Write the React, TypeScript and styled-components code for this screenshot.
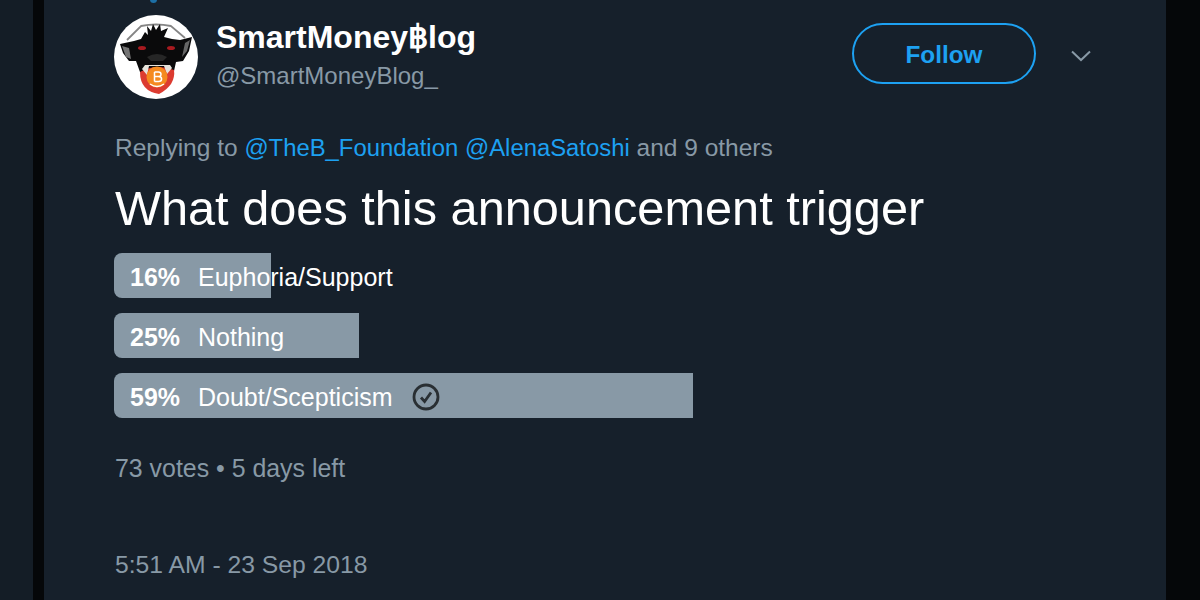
import React from 'react'
import styled, { createGlobalStyle } from 'styled-components'

const GlobalStyle = createGlobalStyle`
  html, body {
    margin: 0;
    padding: 0;
    background: #050709;
    overflow: hidden;
  }
  body {
    font-family: "Liberation Sans", Arial, sans-serif;
  }
`

const options = [
  { percent: 16, width: 157, label: 'Euphoria/Support', chosen: false },
  { percent: 25, width: 245, label: 'Nothing', chosen: false },
  { percent: 59, width: 579, label: 'Doubt/Scepticism', chosen: true },
]

const Avatar: React.FC = () => (
  <AvatarSvg viewBox='0 0 84 84' role='img' aria-label='profile picture'>
    <circle cx='42' cy='42' r='42' fill='#fff' />
    <path d='M13 25 L27 11 Q42 8 57 11 L71 23' fill='none' stroke='#858585' strokeWidth='1.8' />
    <path
      d='M6 29 L20 26 L27 24 L31 17 L34 20 L33 11 L37 16 L39 9 L42 15 L46 9 L47 16 L54 13 L50 22 L58 24 L66 25 L78 22 L75 36 L69 46 L62 47 L60 56 L26 57 L22 46 L15 46 L9 38 Z'
      fill='#0a0a0b'
    />
    <path d='M8 31 L15 33 L17 44 L12 42 Z' fill='#747474' />
    <path d='M76 25 L71 28 L68 42 L73 36 Z' fill='#666' />
    <ellipse cx='28' cy='33' rx='4' ry='2' fill='#a81a1f' />
    <ellipse cx='57' cy='33' rx='4' ry='2' fill='#a81a1f' />
    <path d='M33 42 Q43 36 53 42 L49 46 L37 46 Z' fill='#262626' />
    <path d='M26 57 Q42 48 60 55 Q62 70 45 79 Q26 76 26 57 Z' fill='#dc3b30' />
    <path d='M28 54 L33 60 L35 51 L50 51 L53 59 L58 53 L56 50 L31 50 Z' fill='#e6e3dc' />
    <circle cx='43' cy='62' r='10.5' fill='#f58a1f' />
    <path
      d='M40.5 57 L40.5 66.5 M40.5 57 H44.5 Q47 57 47 59.3 Q47 61.6 44.5 61.6 H40.5 M44.5 61.6 Q47.6 61.6 47.6 64 Q47.6 66.5 44.5 66.5 H40.5'
      fill='none'
      stroke='#fff'
      strokeWidth='1.5'
    />
    <path d='M36 69 Q43 74 50 69' fill='none' stroke='#fff' strokeWidth='1.3' />
  </AvatarSvg>
)

const App: React.FC = () => {
  return (
    <>
      <GlobalStyle />
      <Page>
        <Gutter />
        <Strip />
        <Panel>
          <ThreadDot />
          <Header>
            <Avatar />
            <Names>
              <DisplayName>SmartMoney฿log</DisplayName>
              <Handle>@SmartMoneyBlog_</Handle>
            </Names>
            <FollowButton>Follow</FollowButton>
            <Caret viewBox='0 0 22 14' aria-hidden='true'>
              <path d='M2 2.5 L11 11 L20 2.5' fill='none' stroke='#8899a6' strokeWidth='2' />
            </Caret>
          </Header>
          <ReplyLine>
            Replying to <Mention>@TheB_Foundation</Mention> <Mention>@AlenaSatoshi</Mention> and 9 others
          </ReplyLine>
          <Question>What does this announcement trigger</Question>
          <Poll>
            {options.map((option) => (
              <PollRow key={option.label}>
                <PollFill style={{ width: option.width }} />
                <Percent>{option.percent}%</Percent>
                <Label>{option.label}</Label>
                {option.chosen && (
                  <Check viewBox='0 0 28 28' aria-hidden='true'>
                    <circle cx='14' cy='14' r='12' fill='none' stroke='#292f33' strokeWidth='2.8' />
                    <path d='M9 14.5 L12.6 18.5 L19 9.5' fill='none' stroke='#292f33' strokeWidth='2.8' />
                  </Check>
                )}
              </PollRow>
            ))}
          </Poll>
          <PollMeta>73 votes • 5 days left</PollMeta>
          <Timestamp>5:51 AM - 23 Sep 2018</Timestamp>
        </Panel>
      </Page>
    </>
  )
}
export default App

const Page = styled.div`
  display: flex;
  width: 1200px;
  height: 600px;
  overflow: hidden;
  background: #050709;
`

const Gutter = styled.div`
  width: 33px;
  background: #141d26;
`

const Strip = styled.div`
  width: 11px;
  background: #050709;
`

const Panel = styled.main`
  position: relative;
  width: 1122px;
  height: 600px;
  box-sizing: border-box;
  padding: 15px 0 0 70px;
  background: #16202b;
`

const ThreadDot = styled.span`
  position: absolute;
  top: -4px;
  left: 106px;
  width: 7px;
  height: 7px;
  border-radius: 50%;
  background: #1d6fa5;
`

const Header = styled.header`
  display: flex;
  align-items: flex-start;
  height: 84px;
`

const AvatarSvg = styled.svg`
  width: 84px;
  height: 84px;
  flex: none;
  filter: blur(0.4px);
`

const Names = styled.div`
  display: flex;
  flex-direction: column;
  width: 636px;
  margin-left: 18px;
`

const DisplayName = styled.div`
  margin-top: 4px;
  font-size: 32px;
  line-height: 36px;
  font-weight: 700;
  color: #fff;
`

const Handle = styled.div`
  margin-top: 7px;
  font-size: 24px;
  line-height: 28px;
  color: #8899a6;
`

const FollowButton = styled.button`
  width: 184px;
  height: 61px;
  margin-top: 8px;
  padding: 2px 0 0;
  border: 2px solid #1da1f2;
  border-radius: 31px;
  background: transparent;
  color: #1da1f2;
  font-family: inherit;
  font-size: 24.3px;
  font-weight: 700;
`

const Caret = styled.svg`
  width: 22px;
  height: 14px;
  margin: 34px 0 0 34px;
`

const ReplyLine = styled.div`
  margin: 34px 0 0 1px;
  font-size: 24.5px;
  line-height: 30px;
  color: #8899a6;
`

const Mention = styled.span`
  font-size: 23.85px;
  color: #1da1f2;
`

const Question = styled.h1`
  margin: 16px 0 0 1px;
  font-size: 48.7px;
  line-height: 58px;
  font-weight: 400;
  color: #fff;
`

const Poll = styled.div`
  display: flex;
  flex-direction: column;
  gap: 15px;
  margin-top: 16px;
`

const PollRow = styled.div`
  position: relative;
  display: flex;
  align-items: center;
  box-sizing: border-box;
  height: 45px;
  padding: 4px 0 0 16px;
  color: #fff;
  font-size: 25px;
`

const PollFill = styled.div`
  position: absolute;
  top: 0;
  left: 0;
  bottom: 0;
  border-radius: 8px 0 0 8px;
  background: #8899a6;
`

const Percent = styled.span`
  position: relative;
  width: 68px;
  font-weight: 700;
`

const Label = styled.span`
  position: relative;
`

const Check = styled.svg`
  position: relative;
  top: -1px;
  width: 28px;
  height: 28px;
  margin-left: 19px;
`

const PollMeta = styled.div`
  margin: 35px 0 0 1px;
  font-size: 24.9px;
  line-height: 30px;
  color: #8899a6;
`

const Timestamp = styled.div`
  margin: 67px 0 0 1px;
  font-size: 24.7px;
  line-height: 30px;
  color: #8899a6;
`
